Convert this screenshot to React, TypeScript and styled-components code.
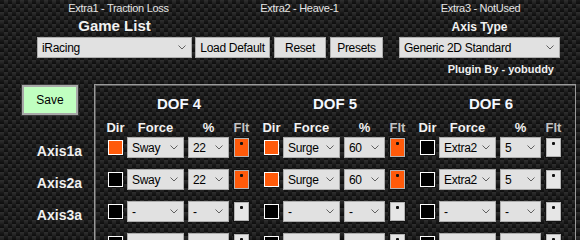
import styled, { createGlobalStyle } from 'styled-components';

const GlobalStyle = createGlobalStyle`
  html, body {
    margin: 0;
    padding: 0;
  }
  body {
    width: 580px;
    height: 240px;
    overflow: hidden;
    font-family: "Liberation Sans", Arial, sans-serif;
    background-color: #1a1a1a;
    background-image:
      linear-gradient(to bottom, rgba(255, 255, 255, 0.04), rgba(0, 0, 0, 0.25)),
      repeating-conic-gradient(#282828 0 25%, #121212 0 50%);
    background-size: 4px 4px, 8px 8px;
  }
`;

type Cell = { dir: boolean; force: string; pct: string; flt: boolean };

const blank: Cell = { dir: false, force: '', pct: '', flt: false };

const dofs: { title: string; rows: Cell[] }[] = [
  {
    title: 'DOF 4',
    rows: [
      { dir: true, force: 'Sway', pct: '22', flt: true },
      { dir: false, force: 'Sway', pct: '22', flt: true },
      { dir: false, force: '-', pct: '-', flt: false },
      blank,
    ],
  },
  {
    title: 'DOF 5',
    rows: [
      { dir: true, force: 'Surge', pct: '60', flt: true },
      { dir: true, force: 'Surge', pct: '60', flt: true },
      { dir: false, force: '-', pct: '-', flt: false },
      blank,
    ],
  },
  {
    title: 'DOF 6',
    rows: [
      { dir: false, force: 'Extra2', pct: '5', flt: false },
      { dir: false, force: 'Extra2', pct: '5', flt: false },
      { dir: false, force: '-', pct: '-', flt: false },
      blank,
    ],
  },
];

const axes = ['Axis1a', 'Axis2a', 'Axis3a'];

const Page = styled.div`
  width: 580px;
  height: 240px;
  overflow: hidden;
`;

const Top = styled.div`
  height: 84px;
`;

const ExtraBar = styled.div`
  display: grid;
  grid-template-columns: repeat(3, 181px);
  padding: 2px 0 0 28px;
  height: 13px;
`;

const ExtraLabel = styled.div`
  text-align: center;
  font-size: 11px;
  line-height: 13px;
  letter-spacing: -0.3px;
  color: #e6e6e6;
`;

const Controls = styled.div`
  display: flex;
  align-items: flex-start;
  padding-left: 37px;
`;

const Field = styled.div`
  display: flex;
  flex-direction: column;
  align-items: center;
`;

const FieldTitle = styled.div<{ $size: number }>`
  height: 22px;
  line-height: 22px;
  padding-top: ${(p) => (p.$size < 14 ? 1 : 0)}px;
  box-sizing: border-box;
  font-size: ${(p) => p.$size}px;
  font-weight: bold;
  color: #f2f2f2;
`;

const ButtonRow = styled.div`
  display: flex;
  gap: 4px;
  margin: 22px 0 0 3px;
`;

const Combo = styled.div<{ $w: number }>`
  width: ${(p) => p.$w}px;
  height: 21px;
  box-sizing: border-box;
  border: 1px solid #adadad;
  background: #e1e1e1;
  display: flex;
  align-items: center;
  justify-content: space-between;
  padding: 0 5px 0 4px;
  font-size: 12px;
  letter-spacing: -0.3px;
  color: #000;
  white-space: nowrap;
`;

const Button = styled.div<{ $w: number }>`
  width: ${(p) => p.$w}px;
  height: 21px;
  box-sizing: border-box;
  border: 1px solid #adadad;
  background: #e1e1e1;
  display: flex;
  align-items: center;
  justify-content: center;
  font-size: 12px;
  letter-spacing: -0.3px;
  color: #000;
`;

const AxisField = styled(Field)`
  margin-left: 16px;
`;

const Plugin = styled.div`
  align-self: flex-end;
  margin: 4px 6px 0 0;
  font-size: 11px;
  line-height: 14px;
  font-weight: bold;
  color: #f0f0f0;
`;

const Main = styled.div`
  display: flex;
  align-items: flex-start;
`;

const LeftCol = styled.div`
  width: 94px;
  display: flex;
  flex-direction: column;
`;

const SaveButton = styled.div`
  margin-left: 21px;
  width: 58px;
  height: 32px;
  box-sizing: border-box;
  border: 1px solid #3a3a3a;
  box-shadow: inset 0 0 0 2px #a8a8a8;
  background: #c0ffc0;
  display: flex;
  align-items: center;
  justify-content: center;
  font-size: 12px;
  color: #000;
`;

const AxisLabels = styled.div`
  margin-top: 19px;
  padding-right: 12px;
  display: flex;
  flex-direction: column;
  align-items: flex-end;
`;

const AxisLabel = styled.div`
  height: 32px;
  line-height: 32px;
  font-size: 14px;
  font-weight: bold;
  color: #f0f0f0;
`;

const GroupBox = styled.div`
  width: 482px;
  height: 170px;
  box-sizing: border-box;
  border: 1px solid #9a9a9a;
  box-shadow: inset 1px 1px 0 #5a5a5a;
  border-bottom: none;
  padding: 10px 12px 0 13px;
  display: flex;
  gap: 14px;
`;

const Dof = styled.div`
  width: 142px;
  display: flex;
  flex-direction: column;
`;

const DofTitle = styled.div`
  height: 17px;
  line-height: 17px;
  text-align: center;
  font-size: 15px;
  font-weight: bold;
  color: #f4f8ff;
`;

const Rule = styled.div`
  width: 140px;
  height: 2px;
  background: #d4d4d4;
  border-right: 1px solid #8a8a8a;
`;

const Grid = styled.div`
  display: grid;
  grid-template-columns: 15px 57px 41px 17px;
  column-gap: 4px;
  align-items: center;
`;

const HeadRow = styled(Grid)`
  margin-top: 8px;
  height: 16px;
`;

const Head = styled.div<{ $dim?: boolean }>`
  font-size: 13px;
  line-height: 16px;
  font-weight: bold;
  white-space: nowrap;
  color: ${(p) => (p.$dim ? '#c4c4c4' : '#f2f2f2')};
  display: flex;
  justify-content: center;
`;

const Rows = styled.div`
  margin-top: 1px;
  display: flex;
  flex-direction: column;
  gap: 11px;
`;

const Row = styled(Grid)`
  height: 21px;
`;

const DirBox = styled.div<{ $on: boolean }>`
  width: 15px;
  height: 15px;
  box-sizing: border-box;
  border: 1px solid #ffffff;
  background: ${(p) => (p.$on ? '#ff5a0a' : '#000')};
`;

const FltBox = styled.div<{ $on: boolean }>`
  width: 17px;
  height: 21px;
  box-sizing: border-box;
  border: 1px solid #141414;
  box-shadow: inset 0 0 0 1px #b4b4b4;
  background: ${(p) => (p.$on ? '#ff5a0a' : '#e6e6e6')};
  display: flex;
  justify-content: center;
  padding-top: 4px;
`;

const Dot = styled.div`
  width: 3px;
  height: 3px;
  border-radius: 1px;
  background: #111;
`;

const Chevron = () => (
  <svg width="8" height="5" viewBox="0 0 8 5">
    <polyline points="0.5,0.5 4,4 7.5,0.5" fill="none" stroke="#606060" strokeWidth="1" />
  </svg>
);

const Select = ({ w, value }: { w: number; value: string }) => (
  <Combo $w={w}>
    <span>{value}</span>
    <Chevron />
  </Combo>
);

const App = () => {
  return (
    <Page>
      <GlobalStyle />
      <Top>
        <ExtraBar>
          <ExtraLabel>Extra1 - Traction Loss</ExtraLabel>
          <ExtraLabel>Extra2 - Heave-1</ExtraLabel>
          <ExtraLabel>Extra3 - NotUsed</ExtraLabel>
        </ExtraBar>
        <Controls>
          <Field>
            <FieldTitle $size={15}>Game List</FieldTitle>
            <Select w={155} value="iRacing" />
          </Field>
          <ButtonRow>
            <Button $w={75}>Load Default</Button>
            <Button $w={52}>Reset</Button>
            <Button $w={53}>Presets</Button>
          </ButtonRow>
          <AxisField>
            <FieldTitle $size={12}>Axis Type</FieldTitle>
            <Select w={161} value="Generic 2D Standard" />
            <Plugin>Plugin By - yobuddy</Plugin>
          </AxisField>
        </Controls>
      </Top>
      <Main>
        <LeftCol>
          <SaveButton>Save</SaveButton>
          <AxisLabels>
            {axes.map((a) => (
              <AxisLabel key={a}>{a}</AxisLabel>
            ))}
          </AxisLabels>
        </LeftCol>
        <GroupBox>
          {dofs.map((d) => (
            <Dof key={d.title}>
              <DofTitle>{d.title}</DofTitle>
              <Rule />
              <HeadRow>
                <Head>Dir</Head>
                <Head>Force</Head>
                <Head>%</Head>
                <Head $dim>Flt</Head>
              </HeadRow>
              <Rows>
                {d.rows.map((r, i) => (
                  <Row key={i}>
                    <DirBox $on={r.dir} />
                    <Select w={57} value={r.force} />
                    <Select w={41} value={r.pct} />
                    <FltBox $on={r.flt}>
                      <Dot />
                    </FltBox>
                  </Row>
                ))}
              </Rows>
            </Dof>
          ))}
        </GroupBox>
      </Main>
    </Page>
  );
};

export default App;
